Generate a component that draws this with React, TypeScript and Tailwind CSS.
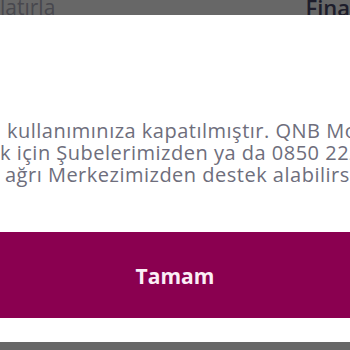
import React from 'react';

const lines = [
  { text: 'kullanımınıza kapatılmıştır. QNB Mobil', offset: 'pl-[7px]' },
  { text: 'k için Şubelerimizden ya da 0850 222 0 900', offset: 'pl-[0px]' },
  { text: 'ağrı Merkezimizden destek alabilirsiniz.', offset: 'pl-[5px]' },
];

const App: React.FC = () => {
  return (
    <div
      className="w-[350px] h-[350px] flex flex-col bg-white overflow-hidden"
      style={{ fontFamily: '"Open Sans", "Noto Sans", sans-serif' }}
    >
      {/* dimmed page behind the dialog */}
      <div className="h-[15px] shrink-0 bg-[#676767] flex items-end justify-between overflow-hidden">
        <span className="text-[21px] leading-[20px] text-[#48484e] -mb-[2px] whitespace-nowrap">
          latırla
        </span>
        <span className="text-[22px] leading-[20px] font-semibold text-[#1d1d2b] -mb-[2px] whitespace-nowrap">
          Fina
        </span>
      </div>

      {/* dialog */}
      <div className="flex-1 flex flex-col">
        <div className="pt-[105px] flex flex-col text-[20px] leading-[22px] tracking-[0.5px] text-[#6e6e7c]">
          {lines.map((line, i) => (
            <p key={i} className={`whitespace-nowrap ${line.offset}`}>
              {line.text}
            </p>
          ))}
        </div>

        <button className="mt-[46px] h-[86px] w-full bg-[#8a0050] flex items-center justify-center pt-[4px]">
          <span className="text-[21px] font-bold text-[#fbeef6]">Tamam</span>
        </button>
      </div>

      <div className="h-[8px] shrink-0 bg-[#676767]" />
    </div>
  );
};

export default App;
